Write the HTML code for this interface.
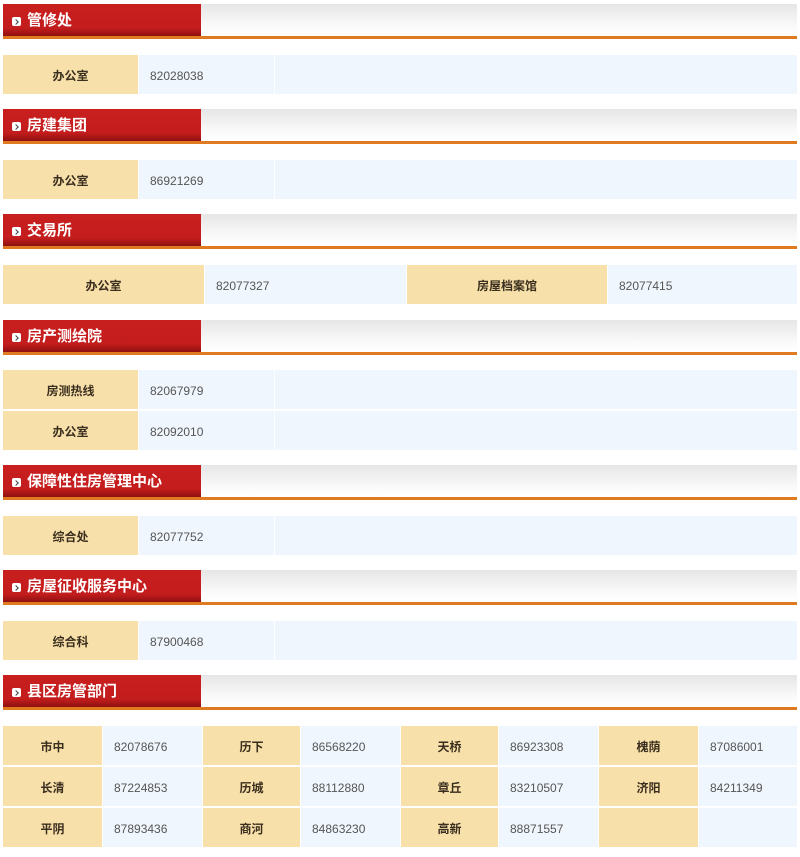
<!DOCTYPE html>
<html><head><meta charset="utf-8"><style>
body{margin:0;width:800px;height:857px;background:#fff;position:relative;font-family:"Liberation Sans","Noto Sans CJK SC",sans-serif;overflow:hidden}
.h{position:absolute;left:3px;width:794px;height:35px}
.h .g{position:absolute;left:198px;right:0;top:0;height:32px;background:linear-gradient(#e6e6e6,#fafafa 70%,#fff)}
.h .r{position:absolute;left:0;top:0;width:198px;height:32px;background:linear-gradient(#c81e1e 0,#c41d1d 75%,#8e1010 100%);color:#fff;font-weight:bold;font-size:15px;line-height:34px}
.h .r span{position:absolute;left:24px;top:0}
.h .r i{position:absolute;left:9px;top:13px;width:9px;height:9px;background:#fff;border-radius:2px}
.h .r i:after{content:"";position:absolute;left:2px;top:2.5px;width:3px;height:3px;border-right:1.5px solid #444;border-bottom:1.5px solid #444;transform:rotate(-45deg)}
.h .o{position:absolute;left:0;right:0;top:32px;height:3px;background:#e07a20}
.c{position:absolute;height:39px;line-height:42px;font-size:12px;color:#555}
.l{background:#f8e0aa;text-align:center;font-weight:bold;color:#3a2e1e}
.v{background:#f0f6fd;padding-left:11px;box-sizing:border-box}
</style></head><body>

<div class="h" style="top:4px"><div class="g"></div><div class="r"><i></i><span>管修处</span></div><div class="o"></div></div>
<div class="c l" style="left:3px;top:55px;width:135px">办公室</div>
<div class="c v" style="left:139px;top:55px;width:135px">82028038</div>
<div class="c v" style="left:275px;top:55px;width:522px"></div>

<div class="h" style="top:109px"><div class="g"></div><div class="r"><i></i><span>房建集团</span></div><div class="o"></div></div>
<div class="c l" style="left:3px;top:160px;width:135px">办公室</div>
<div class="c v" style="left:139px;top:160px;width:135px">86921269</div>
<div class="c v" style="left:275px;top:160px;width:522px"></div>

<div class="h" style="top:214px"><div class="g"></div><div class="r"><i></i><span>交易所</span></div><div class="o"></div></div>
<div class="c l" style="left:3px;top:265px;width:201px">办公室</div>
<div class="c v" style="left:205px;top:265px;width:201px">82077327</div>
<div class="c l" style="left:407px;top:265px;width:200px">房屋档案馆</div>
<div class="c v" style="left:608px;top:265px;width:189px">82077415</div>

<div class="h" style="top:320px"><div class="g"></div><div class="r"><i></i><span>房产测绘院</span></div><div class="o"></div></div>
<div class="c l" style="left:3px;top:370px;width:135px">房测热线</div>
<div class="c v" style="left:139px;top:370px;width:135px">82067979</div>
<div class="c v" style="left:275px;top:370px;width:522px"></div>
<div class="c l" style="left:3px;top:411px;width:135px">办公室</div>
<div class="c v" style="left:139px;top:411px;width:135px">82092010</div>
<div class="c v" style="left:275px;top:411px;width:522px"></div>

<div class="h" style="top:465px"><div class="g"></div><div class="r"><i></i><span>保障性住房管理中心</span></div><div class="o"></div></div>
<div class="c l" style="left:3px;top:516px;width:135px">综合处</div>
<div class="c v" style="left:139px;top:516px;width:135px">82077752</div>
<div class="c v" style="left:275px;top:516px;width:522px"></div>

<div class="h" style="top:570px"><div class="g"></div><div class="r"><i></i><span>房屋征收服务中心</span></div><div class="o"></div></div>
<div class="c l" style="left:3px;top:621px;width:135px">综合科</div>
<div class="c v" style="left:139px;top:621px;width:135px">87900468</div>
<div class="c v" style="left:275px;top:621px;width:522px"></div>

<div class="h" style="top:675px"><div class="g"></div><div class="r"><i></i><span>县区房管部门</span></div><div class="o"></div></div>

<div class="c l" style="left:3px;top:726px;width:99px">市中</div>
<div class="c v" style="left:103px;top:726px;width:99px">82078676</div>
<div class="c l" style="left:203px;top:726px;width:97px">历下</div>
<div class="c v" style="left:301px;top:726px;width:99px">86568220</div>
<div class="c l" style="left:401px;top:726px;width:97px">天桥</div>
<div class="c v" style="left:499px;top:726px;width:99px">86923308</div>
<div class="c l" style="left:599px;top:726px;width:99px">槐荫</div>
<div class="c v" style="left:699px;top:726px;width:98px">87086001</div>

<div class="c l" style="left:3px;top:767px;width:99px">长清</div>
<div class="c v" style="left:103px;top:767px;width:99px">87224853</div>
<div class="c l" style="left:203px;top:767px;width:97px">历城</div>
<div class="c v" style="left:301px;top:767px;width:99px">88112880</div>
<div class="c l" style="left:401px;top:767px;width:97px">章丘</div>
<div class="c v" style="left:499px;top:767px;width:99px">83210507</div>
<div class="c l" style="left:599px;top:767px;width:99px">济阳</div>
<div class="c v" style="left:699px;top:767px;width:98px">84211349</div>

<div class="c l" style="left:3px;top:808px;width:99px">平阴</div>
<div class="c v" style="left:103px;top:808px;width:99px">87893436</div>
<div class="c l" style="left:203px;top:808px;width:97px">商河</div>
<div class="c v" style="left:301px;top:808px;width:99px">84863230</div>
<div class="c l" style="left:401px;top:808px;width:97px">高新</div>
<div class="c v" style="left:499px;top:808px;width:99px">88871557</div>
<div class="c l" style="left:599px;top:808px;width:99px"></div>
<div class="c v" style="left:699px;top:808px;width:98px"></div>

</body></html>
